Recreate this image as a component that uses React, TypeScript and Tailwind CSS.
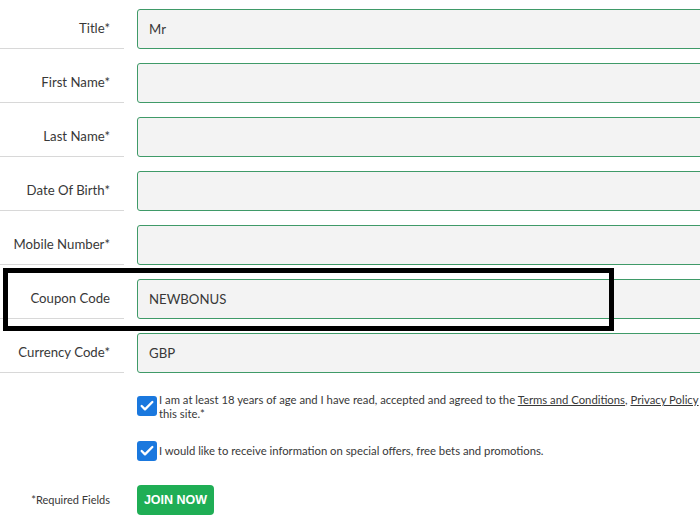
import { Check } from 'lucide-react';

const fields = [
  { label: 'Title*', value: 'Mr' },
  { label: 'First Name*', value: '' },
  { label: 'Last Name*', value: '' },
  { label: 'Date Of Birth*', value: '' },
  { label: 'Mobile Number*', value: '' },
  { label: 'Coupon Code', value: 'NEWBONUS' },
  { label: 'Currency Code*', value: 'GBP' },
];

const CheckBox = () => (
  <span className="flex items-center justify-center w-[20px] h-[20px] shrink-0 rounded-[3px] bg-[#1a78de]">
    <Check size={16} strokeWidth={3.5} color="white" />
  </span>
);

export default function App() {
  return (
    <div
      className="relative w-[700px] h-[518px] overflow-hidden bg-white text-[#383838]"
      style={{ fontFamily: 'Lato, "Open Sans", sans-serif' }}
    >
      {/* Form rows */}
      <div className="flex flex-col">
        {fields.map((f) => (
          <div key={f.label} className="flex h-[54px]">
            <div className="w-[124px] h-[49px] shrink-0 border-b border-[#d8d8d8] flex items-center justify-end pr-[14px] pt-[10px] text-[13.2px]">
              {f.label}
            </div>
            <div className="ml-[13px] mt-[9px] h-[40px] w-[600px] shrink-0 rounded-[3px] border border-[#3f9a68] bg-[#f3f3f3] flex items-center px-[11px] pt-[1px] text-[13.2px]">
              {f.value}
            </div>
          </div>
        ))}
      </div>

      {/* Checkboxes */}
      <div className="ml-[137px] mt-[18px] flex flex-col gap-[20px] text-[11.3px] leading-[14px]">
        <div className="flex gap-[2px]">
          <CheckBox />
          <p className="mt-[-3px] whitespace-nowrap">
            I am at least 18 years of age and I have read, accepted and agreed to the{' '}
            <span className="underline">Terms and Conditions</span>, <span className="underline">Privacy Policy</span>
            <br />
            this site.*
          </p>
        </div>
        <div className="flex items-center gap-[2px]">
          <CheckBox />
          <p>I would like to receive information on special offers, free bets and promotions.</p>
        </div>
      </div>

      {/* Footer */}
      <div className="flex items-center mt-[24px]">
        <div className="w-[124px] pr-[14px] text-right text-[11px]">*Required Fields</div>
        <button
          className="ml-[13px] w-[77px] h-[30px] rounded-[4px] bg-[#1fae55] text-white text-[12.5px] font-bold"
          style={{ fontFamily: '"Liberation Sans", Arial, sans-serif' }}
        >
          JOIN NOW
        </button>
      </div>

      {/* Highlight box over the coupon row */}
      <div className="absolute left-[3px] top-[268px] w-[611px] h-[63px] border-[5px] border-black pointer-events-none" />
    </div>
  );
}
